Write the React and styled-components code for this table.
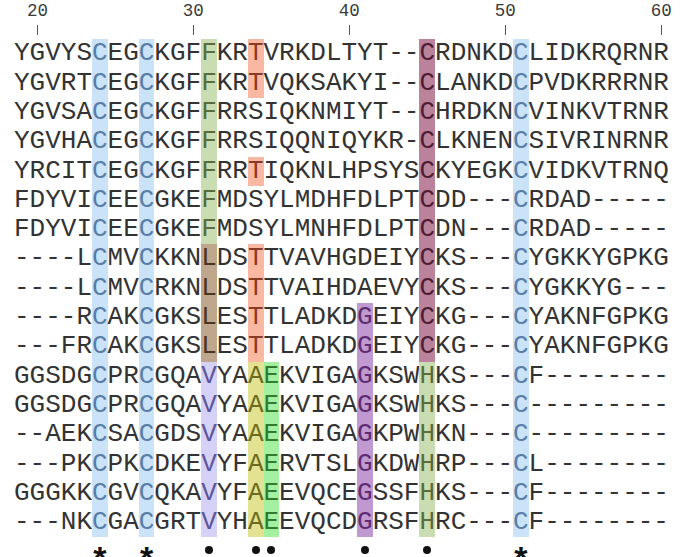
import React from 'react'
import styled, { createGlobalStyle } from 'styled-components'

const GlobalStyle = createGlobalStyle`
  html, body {
    margin: 0;
    background: #ffffff;
  }
`

const CELL = 15.6
const COLS = 42

const sequences = [
  'YGVYSCEGCKGFFKRTVRKDLTYT--CRDNKDCLIDKRQRNR',
  'YGVRTCEGCKGFFKRTVQKSAKYI--CLANKDCPVDKRRRNR',
  'YGVSACEGCKGFFRRSIQKNMIYT--CHRDKNCVINKVTRNR',
  'YGVHACEGCKGFFRRSIQQNIQYKR-CLKNENCSIVRINRNR',
  'YRCITCEGCKGFFRRTIQKNLHPSYSCKYEGKCVIDKVTRNQ',
  'FDYVICEECGKEFMDSYLMDHFDLPTCDD---CRDAD-----',
  'FDYVICEECGKEFMDSYLMNHFDLPTCDN---CRDAD-----',
  '----LCMVCKKNLDSTTVAVHGDEIYCKS---CYGKKYGPKG',
  '----LCMVCRKNLDSTTVAIHDAEVYCKS---CYGKKYG---',
  '----RCAKCGKSLESTTLADKDGEIYCKG---CYAKNFGPKG',
  '---FRCAKCGKSLESTTLADKDGEIYCKG---CYAKNFGPKG',
  'GGSDGCPRCGQAVYAAEKVIGAGKSWHKS---CF--------',
  'GGSDGCPRCGQAVYAAEKVIGAGKSWHKS---C---------',
  '--AEKCSACGDSVYAAEKVIGAGKPWHKN---C---------',
  '---PKCPKCDKEVYFAERVTSLGKDWHRP---CL--------',
  'GGGKKCGVCQKAVYFAEEVQCEGSSFHKS---CF--------',
  '---NKCGACGRTVYHAEEVQCDGRSFHRC---CF--------',
]

// highlight palette: background + tinted letter
const palette = {
  blue: { bg: '#cbe3f8', fg: '#587ea8' },
  olive: { bg: '#cadcb2', fg: '#586c3c' },
  salmon: { bg: '#f9b8a2', fg: '#8a3b26' },
  maroon: { bg: '#ba839b', fg: '#4f1c33' },
  brown: { bg: '#bfa78e', fg: '#4b3522' },
  lavender: { bg: '#d5d1f7', fg: '#5c559a' },
  yellow: { bg: '#e2e292', fg: '#6a6a20' },
  green: { bg: '#a4f0a0', fg: '#307b2d' },
  purple: { bg: '#bf99cf', fg: '#5e2b73' },
}

// [column, firstRow, lastRow, colour] (1-based)
const highlights = [
  [6, 1, 17, 'blue'],
  [9, 1, 17, 'blue'],
  [33, 1, 17, 'blue'],
  [13, 1, 7, 'olive'],
  [13, 8, 11, 'brown'],
  [13, 12, 17, 'lavender'],
  [16, 1, 2, 'salmon'],
  [16, 5, 5, 'salmon'],
  [16, 8, 11, 'salmon'],
  [16, 12, 17, 'yellow'],
  [17, 12, 17, 'green'],
  [23, 10, 17, 'purple'],
  [27, 1, 11, 'maroon'],
  [27, 12, 17, 'olive'],
]

const rulerMarks = [
  [2, 20],
  [12, 30],
  [22, 40],
  [32, 50],
  [42, 60],
]

const markers = {
  6: 'star',
  9: 'star',
  13: 'dot',
  16: 'dot',
  17: 'dot',
  23: 'dot',
  27: 'dot',
  33: 'star',
}

const colourAt = (row, col) => {
  const hit = highlights.find(
    ([c, a, b]) => c === col && row >= a && row <= b
  )
  return hit ? palette[hit[3]] : null
}

const Figure = styled.div`
  padding-left: 14px;
  font-family: 'Liberation Mono', 'DejaVu Sans Mono', monospace;
`

const Ruler = styled.div`
  display: grid;
  grid-template-columns: repeat(${COLS}, ${CELL}px);
  height: 39.4px;
`

const RulerMark = styled.div`
  grid-column: ${(p) => p.$col};
  display: flex;
  flex-direction: column;
  align-items: center;
  padding-top: 1px;
`

const RulerLabel = styled.span`
  font-size: 17.5px;
  line-height: 20px;
  color: #3a3a3a;
  white-space: nowrap;
`

const Tick = styled.span`
  width: 1px;
  height: 10px;
  margin-top: 4px;
  background: #555;
`

const Alignment = styled.div`
  display: grid;
  grid-template-columns: repeat(${COLS}, ${CELL}px);
  grid-auto-rows: 29.3px;
  font-size: 26px;
  line-height: 29.3px;
  color: #333;
`

const Residue = styled.span`
  display: block;
  text-align: center;
  background: ${(p) => (p.$tone ? p.$tone.bg : 'transparent')};
  color: ${(p) => (p.$tone ? p.$tone.fg : 'inherit')};
`

const MarkerRow = styled.div`
  display: grid;
  grid-template-columns: repeat(${COLS}, ${CELL}px);
  height: 26px;
`

const MarkerCell = styled.div`
  grid-column: ${(p) => p.$col};
  display: flex;
  justify-content: center;
  align-items: flex-start;
`

const Star = styled.span`
  font-family: 'Liberation Sans', Arial, sans-serif;
  font-weight: bold;
  font-size: 34px;
  line-height: 34px;
  margin-top: 4px;
  color: #111;
`

const Dot = styled.span`
  width: 8px;
  height: 8px;
  margin-top: 9px;
  border-radius: 50%;
  background: #111;
`

const App = () => {
  return (
    <>
      <GlobalStyle />
      <Figure>
        <Ruler>
          {rulerMarks.map(([col, label]) => (
            <RulerMark key={label} $col={col}>
              <RulerLabel>{label}</RulerLabel>
              <Tick />
            </RulerMark>
          ))}
        </Ruler>
        <Alignment>
          {sequences.map((seq, r) =>
            seq.split('').map((ch, c) => (
              <Residue key={`${r}-${c}`} $tone={colourAt(r + 1, c + 1)}>
                {ch}
              </Residue>
            ))
          )}
        </Alignment>
        <MarkerRow>
          {Object.entries(markers).map(([col, kind]) => (
            <MarkerCell key={col} $col={Number(col)}>
              {kind === 'star' ? <Star>*</Star> : <Dot />}
            </MarkerCell>
          ))}
        </MarkerRow>
      </Figure>
    </>
  )
}

export default App
